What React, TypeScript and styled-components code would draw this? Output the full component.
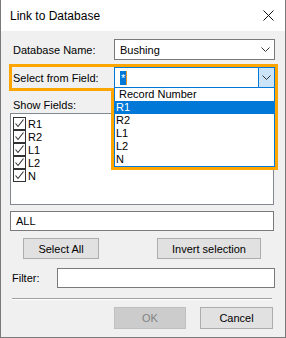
import React from "react";
import styled, { createGlobalStyle } from "styled-components";

const GlobalStyle = createGlobalStyle`
  html, body {
    margin: 0;
    padding: 0;
    background: #ffffff;
  }
  body {
    font-family: "Liberation Sans", Arial, sans-serif;
    font-size: 11px;
    color: #000000;
  }
`;

const Dialog = styled.div`
  position: relative;
  width: 286px;
  height: 338px;
  box-sizing: border-box;
  border: 1px solid #7a7a7a;
  border-top: none;
  background: #f0f0f0;
  display: flex;
  flex-direction: column;
`;

const TitleBar = styled.div`
  height: 31px;
  flex: none;
  background: #ffffff;
  display: flex;
  align-items: center;
  justify-content: space-between;
  padding-left: 9px;
  padding-right: 11px;
  font-size: 12px;
`;

const Body = styled.div`
  display: flex;
  flex-direction: column;
  padding: 8px 0 0 9px;
`;

const FieldRow = styled.div<{ $gap?: number }>`
  display: flex;
  align-items: center;
  height: 21px;
  margin-top: ${(p) => p.$gap ?? 0}px;
`;

const Label = styled.div<{ $width?: number; $indent?: number }>`
  width: ${(p) => p.$width ?? 104}px;
  padding-left: ${(p) => p.$indent ?? 3}px;
  box-sizing: border-box;
  flex: none;
`;

const ComboWrap = styled.div`
  position: relative;
  width: 161px;
  height: 21px;
`;

const Combo = styled.div<{ $open?: boolean }>`
  height: 100%;
  box-sizing: border-box;
  border: 1px solid ${(p) => (p.$open ? "#0078d7" : "#7a7a7a")};
  background: #ffffff;
  display: flex;
  align-items: center;
  padding-left: 5px;
`;

const ComboText = styled.span`
  flex: 1;
`;

const Selection = styled.span`
  display: inline-block;
  height: 14px;
  line-height: 15px;
  padding: 0 1px;
  background: #0078d7;
  color: #ffffff;
  border-right: 1px solid #e0952a;
`;

const Arrow = styled.div<{ $open?: boolean }>`
  width: 16px;
  align-self: stretch;
  display: flex;
  align-items: center;
  justify-content: center;
  box-sizing: border-box;
  background: ${(p) => (p.$open ? "#cce4f7" : "transparent")};
  border-left: 1px solid ${(p) => (p.$open ? "#0078d7" : "transparent")};
  margin-right: ${(p) => (p.$open ? 0 : 1)}px;
`;

const DropList = styled.div`
  position: absolute;
  top: 20px;
  left: 0;
  width: 161px;
  box-sizing: border-box;
  border: 1px solid #0078d7;
  background: #ffffff;
  z-index: 2;
`;

const DropItem = styled.div<{ $active?: boolean; $indent?: number }>`
  height: 13px;
  line-height: 13px;
  padding-left: ${(p) => p.$indent ?? 1}px;
  background: ${(p) => (p.$active ? "#0078d7" : "transparent")};
  color: ${(p) => (p.$active ? "#ffffff" : "#000000")};
`;

const SectionLabel = styled.div`
  margin-top: 11px;
  height: 13px;
  line-height: 13px;
  padding-left: 3px;
`;

const ListBox = styled.div`
  margin-top: 1px;
  width: 264px;
  height: 92px;
  box-sizing: border-box;
  border: 1px solid #828790;
  background: #ffffff;
  padding: 3px 0 0 2px;
`;

const CheckRow = styled.div`
  display: flex;
  align-items: center;
  height: 13px;
  gap: 2px;
`;

const CheckBox = styled.span`
  width: 13px;
  height: 13px;
  box-sizing: border-box;
  border: 1px solid #333333;
  background: #ffffff;
  display: flex;
  align-items: center;
  justify-content: center;
`;

const TextBox = styled.div<{ $width: number; $gap: number }>`
  width: ${(p) => p.$width}px;
  height: 20px;
  margin-top: ${(p) => p.$gap}px;
  box-sizing: border-box;
  border: 1px solid #7a7a7a;
  background: #ffffff;
  display: flex;
  align-items: center;
  padding-left: 5px;
  flex: none;
`;

const ButtonRow = styled.div<{ $gap: number }>`
  display: flex;
  margin-top: ${(p) => p.$gap}px;
`;

const Button = styled.button<{ $width: number; $offset: number; $disabled?: boolean; $height?: number }>`
  width: ${(p) => p.$width}px;
  height: ${(p) => p.$height ?? 21}px;
  margin-left: ${(p) => p.$offset}px;
  box-sizing: border-box;
  padding: 0;
  font: inherit;
  border: 1px solid ${(p) => (p.$disabled ? "#bfbfbf" : "#adadad")};
  background: ${(p) => (p.$disabled ? "#cccccc" : "#e1e1e1")};
  color: ${(p) => (p.$disabled ? "#838383" : "#000000")};
`;

const FilterRow = styled.div`
  display: flex;
  align-items: center;
  margin-top: 9px;
  height: 20px;
`;

const Separator = styled.div`
  margin: 10px 0 0 2px;
  width: 260px;
  border-top: 1px solid #a0a0a0;
  border-bottom: 1px solid #ffffff;
`;

const Highlight = styled.svg`
  position: absolute;
  left: -1px;
  top: 0;
  pointer-events: none;
  z-index: 3;
`;

const Chevron = () => (
  <svg width="9" height="5" viewBox="0 0 9 5">
    <polyline points="0.5,0.5 4.5,4.5 8.5,0.5" fill="none" stroke="#333" strokeWidth="1" />
  </svg>
);

const Check = () => (
  <svg width="11" height="11" viewBox="0 0 11 11">
    <polyline points="1.5,5.5 4,8.5 9.5,1.5" fill="none" stroke="#333" strokeWidth="1.1" />
  </svg>
);

const fields = ["R1", "R2", "L1", "L2", "N"];

export default function App() {
  return (
    <>
      <GlobalStyle />
      <Dialog>
        <TitleBar>
          <span>Link to Database</span>
          <svg width="11" height="11" viewBox="0 0 11 11">
            <path d="M0.5 0.5 L10.5 10.5 M10.5 0.5 L0.5 10.5" stroke="#111" strokeWidth="1" />
          </svg>
        </TitleBar>
        <Body>
          <FieldRow>
            <Label>Database Name:</Label>
            <ComboWrap>
              <Combo>
                <ComboText>Bushing</ComboText>
                <Arrow>
                  <Chevron />
                </Arrow>
              </Combo>
            </ComboWrap>
          </FieldRow>
          <FieldRow $gap={7}>
            <Label>Select from Field:</Label>
            <ComboWrap>
              <Combo $open>
                <ComboText>
                  <Selection>*</Selection>
                </ComboText>
                <Arrow $open>
                  <Chevron />
                </Arrow>
              </Combo>
              <DropList>
                <DropItem $indent={4}>Record Number</DropItem>
                {fields.map((f) => (
                  <DropItem key={f} $active={f === "R1"}>
                    {f}
                  </DropItem>
                ))}
              </DropList>
            </ComboWrap>
          </FieldRow>
          <SectionLabel>Show Fields:</SectionLabel>
          <ListBox>
            {fields.map((f) => (
              <CheckRow key={f}>
                <CheckBox>
                  <Check />
                </CheckBox>
                <span>{f}</span>
              </CheckRow>
            ))}
          </ListBox>
          <TextBox $width={264} $gap={6}>ALL</TextBox>
          <ButtonRow $gap={7}>
            <Button $width={76} $offset={13}>Select All</Button>
            <Button $width={104} $offset={58}>Invert selection</Button>
          </ButtonRow>
          <FilterRow>
            <Label $width={47} $indent={2}>Filter:</Label>
            <TextBox $width={218} $gap={0} />
          </FilterRow>
          <Separator />
          <ButtonRow $gap={7}>
            <Button $width={72} $offset={104} $height={22} $disabled>
              OK
            </Button>
            <Button $width={73} $offset={14} $height={22}>
              Cancel
            </Button>
          </ButtonRow>
        </Body>
        <Highlight width="286" height="338">
          <path
            d="M10.5 65.5 H276.5 V168.5 H112.5 V89.5 H10.5 Z"
            fill="none"
            stroke="#ffa500"
            strokeWidth="3"
          />
        </Highlight>
      </Dialog>
    </>
  );
}
